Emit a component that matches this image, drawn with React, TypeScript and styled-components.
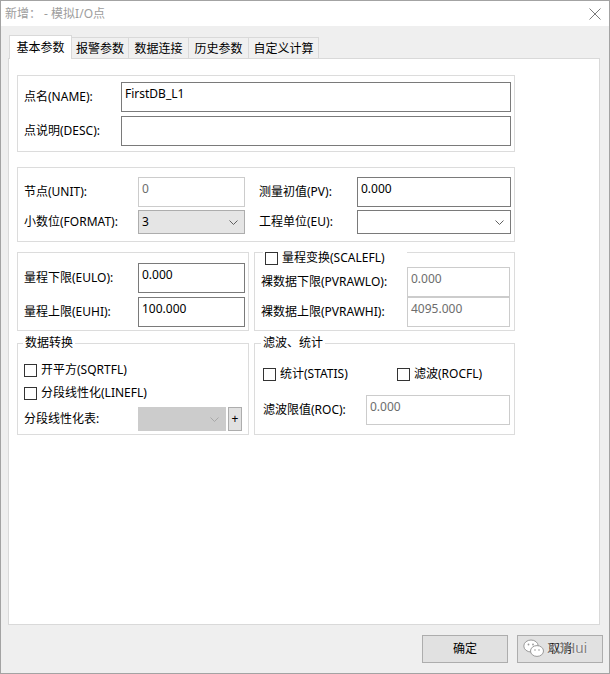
import styled, { createGlobalStyle } from "styled-components";

const GlobalStyle = createGlobalStyle`
  html, body {
    margin: 0;
    padding: 0;
    background: #efefef;
  }
  body {
    font-family: "Noto Sans", "Noto Sans CJK SC", sans-serif;
    font-size: 12px;
    line-height: 16px;
    color: #000;
  }
`;

const Window = styled.div`
  width: 610px;
  height: 674px;
  box-sizing: border-box;
  border: 1px solid #a3a3a3;
  background: #efefef;
  display: flex;
  flex-direction: column;
`;

const TitleBar = styled.div`
  height: 25px;
  background: #fff;
  display: flex;
  align-items: center;
  justify-content: space-between;
  padding: 0 8px 0 4px;
  color: #9d9d9d;
  flex-shrink: 0;
`;

const Body = styled.div`
  flex: 1;
  display: flex;
  flex-direction: column;
  padding: 9px 6px 0 7px;
`;

const TabStrip = styled.div`
  display: flex;
  align-items: flex-end;
  height: 23px;
  padding-left: 1px;
`;

const Tab = styled.div<{ $w: number; $active?: boolean }>`
  position: relative;
  z-index: ${(p) => (p.$active ? 2 : 1)};
  box-sizing: border-box;
  width: ${(p) => p.$w}px;
  height: ${(p) => (p.$active ? 24 : 21)}px;
  margin-bottom: ${(p) => (p.$active ? -1 : 0)}px;
  margin-left: -1px;
  border: 1px solid #d9d9d9;
  border-bottom: none;
  background: ${(p) => (p.$active ? "#fff" : "#f0f0f0")};
  display: flex;
  align-items: center;
  justify-content: center;
  padding-top: ${(p) => (p.$active ? 0 : 1)}px;
  &:first-child {
    margin-left: 0;
  }
`;

const Panel = styled.div`
  box-sizing: border-box;
  width: 592px;
  height: 567px;
  background: #fff;
  border: 1px solid #d9d9d9;
  padding: 16px 0 0 8px;
  display: flex;
  flex-direction: column;
`;

const Group = styled.div<{ $pad: string; $w?: number }>`
  position: relative;
  box-sizing: border-box;
  width: ${(p) => p.$w ?? 498}px;
  border: 1px solid #dcdcdc;
  padding: ${(p) => p.$pad};
`;

const Legend = styled.div<{ $left: number; $top?: number; $extra?: number }>`
  position: absolute;
  left: ${(p) => p.$left}px;
  top: ${(p) => p.$top ?? -9}px;
  background: #fff;
  padding: 0 ${(p) => 2 + (p.$extra ?? 0)}px 0 2px;
  line-height: 16px;
  display: flex;
  align-items: center;
  gap: 4px;
  white-space: nowrap;
`;

const FormGrid = styled.div<{ $cols: string; $rows: string; $gap?: number }>`
  display: grid;
  grid-template-columns: ${(p) => p.$cols};
  grid-template-rows: ${(p) => p.$rows};
  row-gap: ${(p) => p.$gap ?? 0}px;
  align-items: center;
`;

const Label = styled.div`
  white-space: nowrap;
`;

const TextBox = styled.div<{ $disabled?: boolean }>`
  box-sizing: border-box;
  height: 30px;
  align-self: stretch;
  border: 1px solid ${(p) => (p.$disabled ? "#cccccc" : "#7a7a7a")};
  background: #fff;
  color: ${(p) => (p.$disabled ? "#6d6d6d" : "#000")};
  padding: 3px 3px 0 3px;
  white-space: nowrap;
  overflow: hidden;
`;

const Select = styled.div<{ $variant: "plain" | "gray" | "disabled" }>`
  box-sizing: border-box;
  height: 24px;
  border: 1px solid
    ${(p) =>
      p.$variant === "plain" ? "#7a7a7a" : p.$variant === "gray" ? "#adadad" : "#cccccc"};
  background: ${(p) =>
    p.$variant === "plain" ? "#fff" : p.$variant === "gray" ? "#e5e5e5" : "#cccccc"};
  display: flex;
  align-items: center;
  justify-content: space-between;
  padding: 0 6px 0 3px;
`;

const Row = styled.div<{ $gap: number; $mt: number }>`
  display: flex;
  gap: ${(p) => p.$gap}px;
  margin-top: ${(p) => p.$mt}px;
`;

const CheckLine = styled.div<{ $w?: number }>`
  display: flex;
  align-items: center;
  gap: 4px;
  height: 16px;
  width: ${(p) => (p.$w ? `${p.$w}px` : "auto")};
  white-space: nowrap;
`;

const Box = styled.span`
  box-sizing: border-box;
  display: inline-block;
  width: 13px;
  height: 13px;
  border: 1px solid #333;
  background: #fff;
  flex-shrink: 0;
`;

const Stack = styled.div<{ $gap: number }>`
  display: flex;
  flex-direction: column;
  gap: ${(p) => p.$gap}px;
`;

const SelectRow = styled.div`
  display: flex;
  align-items: center;
  height: 24px;
`;

const PlusButton = styled.div`
  box-sizing: border-box;
  width: 14px;
  height: 24px;
  margin-left: 2px;
  border: 1px solid #adadad;
  background: #e1e1e1;
  display: flex;
  align-items: center;
  justify-content: center;
  font-size: 12px;
`;

const Footer = styled.div`
  display: flex;
  justify-content: flex-end;
  gap: 9px;
  margin-top: 10px;
`;

const Button = styled.div`
  position: relative;
  box-sizing: border-box;
  width: 86px;
  height: 28px;
  border: 1px solid #adadad;
  background: #e1e1e1;
  display: flex;
  align-items: center;
  justify-content: center;
`;

const Watermark = styled.div`
  position: absolute;
  left: 5px;
  top: 2px;
  display: flex;
  align-items: center;
  gap: 2px;
  color: rgba(110, 110, 110, 0.85);
  font-family: "Liberation Sans", sans-serif;
  font-size: 15px;
  text-shadow: 0 0 2px #fff;
  pointer-events: none;
`;

function Chevron({ color }: { color: string }) {
  return (
    <svg width="9" height="5" viewBox="0 0 9 5">
      <polyline points="0.5,0.5 4.5,4.5 8.5,0.5" fill="none" stroke={color} strokeWidth="1" />
    </svg>
  );
}

function Check({ children, w }: { children: React.ReactNode; w?: number }) {
  return (
    <CheckLine $w={w}>
      <Box />
      <span>{children}</span>
    </CheckLine>
  );
}

const tabs = [
  { name: "基本参数", w: 63 },
  { name: "报警参数", w: 58 },
  { name: "数据连接", w: 61 },
  { name: "历史参数", w: 61 },
  { name: "自定义计算", w: 71 },
];

export default function App() {
  return (
    <>
      <GlobalStyle />
      <Window>
        <TitleBar>
          <span>新增： - 模拟I/O点</span>
          <svg width="12" height="12" viewBox="0 0 12 12">
            <path d="M0.5 0.5 L11.5 11.5 M11.5 0.5 L0.5 11.5" stroke="#7a7a7a" strokeWidth="1" />
          </svg>
        </TitleBar>
        <Body>
          <TabStrip>
            {tabs.map((t, i) => (
              <Tab key={t.name} $w={t.w} $active={i === 0}>
                {t.name}
              </Tab>
            ))}
          </TabStrip>
          <Panel>
            <Group $pad="6px 3px 5px 6px">
              <FormGrid $cols="97px 390px" $rows="30px 30px" $gap={4}>
                <Label>点名(NAME):</Label>
                <TextBox>FirstDB_L1</TextBox>
                <Label>点说明(DESC):</Label>
                <TextBox />
              </FormGrid>
            </Group>

            <Row $gap={0} $mt={15}>
              <Group $pad="9px 3px 7px 6px">
                <FormGrid $cols="114px 107px 14px 98px 154px" $rows="30px 24px" $gap={3}>
                  <Label>节点(UNIT):</Label>
                  <TextBox $disabled>0</TextBox>
                  <span />
                  <Label>测量初值(PV):</Label>
                  <TextBox>0.000</TextBox>
                  <Label>小数位(FORMAT):</Label>
                  <Select $variant="gray">
                    <span>3</span>
                    <Chevron color="#606060" />
                  </Select>
                  <span />
                  <Label>工程单位(EU):</Label>
                  <Select $variant="plain">
                    <span />
                    <Chevron color="#606060" />
                  </Select>
                </FormGrid>
              </Group>
            </Row>

            <Row $gap={5} $mt={10}>
              <Group $w={232} $pad="10px 3px 3px 6px">
                <FormGrid $cols="114px 107px" $rows="30px 30px" $gap={4}>
                  <Label>量程下限(EULO):</Label>
                  <TextBox>0.000</TextBox>
                  <Label>量程上限(EUHI):</Label>
                  <TextBox>100.000</TextBox>
                </FormGrid>
              </Group>
              <Group $w={261} $pad="14px 3px 3px 6px">
                <Legend $left={8} $top={-3} $extra={20}>
                  <Box />
                  <span>量程变换(SCALEFL)</span>
                </Legend>
                <FormGrid $cols="146px 103px" $rows="30px 30px">
                  <Label>裸数据下限(PVRAWLO):</Label>
                  <TextBox $disabled>0.000</TextBox>
                  <Label>裸数据上限(PVRAWHI):</Label>
                  <TextBox $disabled>4095.000</TextBox>
                </FormGrid>
              </Group>
            </Row>

            <Row $gap={5} $mt={12}>
              <Group $w={232} $pad="18px 3px 3px 6px">
                <Legend $left={5}>数据转换</Legend>
                <Stack $gap={7}>
                  <Check>开平方(SQRTFL)</Check>
                  <Stack $gap={6}>
                    <Check>分段线性化(LINEFL)</Check>
                    <SelectRow>
                      <Label style={{ width: 114 }}>分段线性化表:</Label>
                      <Select $variant="disabled" style={{ width: 88 }}>
                        <span />
                        <Chevron color="#a8a8a8" />
                      </Select>
                      <PlusButton>+</PlusButton>
                    </SelectRow>
                  </Stack>
                </Stack>
              </Group>
              <Group $w={261} $pad="22px 3px 9px 8px">
                <Legend $left={6}>滤波、统计</Legend>
                <Stack $gap={13}>
                  <CheckLine>
                    <Check w={130}>统计(STATIS)</Check>
                    <Check>滤波(ROCFL)</Check>
                  </CheckLine>
                  <FormGrid $cols="103px 144px" $rows="30px">
                    <Label>滤波限值(ROC):</Label>
                    <TextBox $disabled>0.000</TextBox>
                  </FormGrid>
                </Stack>
              </Group>
            </Row>
          </Panel>
          <Footer>
            <Button>确定</Button>
            <Button>
              取消
              <Watermark>
                <svg width="22" height="20" viewBox="0 0 22 20">
                  <ellipse cx="8" cy="8" rx="7.2" ry="6" fill="#fff" stroke="#9a9a9a" strokeWidth="1" />
                  <ellipse cx="14" cy="13" rx="6.5" ry="5.4" fill="#fff" stroke="#9a9a9a" strokeWidth="1" />
                  <circle cx="5.5" cy="6.5" r="0.9" fill="#9a9a9a" />
                  <circle cx="10" cy="6.5" r="0.9" fill="#9a9a9a" />
                  <circle cx="12" cy="12" r="0.8" fill="#9a9a9a" />
                  <circle cx="16" cy="12" r="0.8" fill="#9a9a9a" />
                </svg>
                <span>XJHui</span>
              </Watermark>
            </Button>
          </Footer>
        </Body>
      </Window>
    </>
  );
}
